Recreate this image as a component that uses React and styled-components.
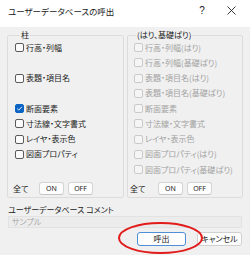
import React from "react";
import styled, { createGlobalStyle } from "styled-components";

const Global = createGlobalStyle`
  html, body { margin: 0; padding: 0; background: #f0f0f0; }
  body { font-family: "Noto Sans CJK JP", "Noto Sans", sans-serif; font-feature-settings: "palt"; }
`;

const Win = styled.div`
  position: relative;
  width: 250px;
  height: 255px;
  background: #f0f0f0;
  overflow: hidden;
  font-size: 8px;
  color: #1a1a1a;
`;

const TitleBar = styled.div`
  height: 27px;
  background: #ffffff;
  display: flex;
  align-items: center;
  padding-left: 8px;
  box-sizing: border-box;
`;

const Title = styled.div`
  flex: 1;
  font-size: 8.5px;
  line-height: 12px;
  margin-top: -6px;
`;

const TitleBtn = styled.div`
  width: ${(p) => p.$w}px;
  display: flex;
  justify-content: center;
  align-items: center;
  font-family: "Liberation Sans", sans-serif;
  font-size: 10px;
  margin-top: -6px;
`;

const Body = styled.div`
  padding: 3px 8px 0 7px;
`;

const Groups = styled.div`
  display: grid;
  grid-template-columns: 117px 116px;
  gap: 3px;
`;

const Group = styled.fieldset`
  margin: 0;
  border: 1px solid #dcdcdc;
  border-radius: 2px;
  padding: 0 0 2px ${(p) => p.$pad}px;
  min-width: 0;
`;

const Legend = styled.legend`
  font-size: 8px;
  line-height: 10px;
  padding: 0 1px;
  margin-left: ${(p) => p.$ml}px;
`;

const List = styled.div`
  display: grid;
  grid-template-rows: repeat(9, 15.25px);
`;

const Item = styled.div`
  display: flex;
  align-items: center;
  gap: 2px;
  white-space: nowrap;
  color: ${(p) => (p.$disabled ? "#a2a2a2" : "#1a1a1a")};
  line-height: 10px;
`;

const Box = styled.span`
  width: 9px;
  height: 9px;
  box-sizing: border-box;
  border-radius: 2px;
  border: 1px solid ${(p) => (p.$checked ? "#0a64c4" : p.$disabled ? "#cacaca" : "#5a5a5a")};
  background: ${(p) => (p.$checked ? "#0a64c4" : p.$disabled ? "#f5f5f5" : "#fcfcfc")};
  display: flex;
  align-items: center;
  justify-content: center;
  flex: none;
`;

const AllRow = styled.div`
  display: flex;
  align-items: center;
  margin-top: 4.75px;
  height: 13px;
`;

const AllLabel = styled.span`
  width: ${(p) => p.$w}px;
  line-height: 10px;
  margin-left: ${(p) => p.$ml}px;
`;

const SmallBtn = styled.button`
  width: 25px;
  height: 13px;
  margin-right: 4px;
  padding: 0;
  border: 1px solid #d4d4d4;
  border-bottom-color: #c4c4c4;
  border-radius: 3px;
  background: #fdfdfd;
  font-family: "Noto Sans", sans-serif;
  font-size: 7px;
  line-height: 11px;
  color: #1a1a1a;
`;

const CommentLabel = styled.div`
  margin-top: 6px;
  line-height: 11px;
  padding-left: 1px;
`;

const CommentBox = styled.div`
  margin-top: 1px;
  height: 12px;
  box-sizing: border-box;
  border: 1px solid #e2e2e2;
  background: #ececec;
  color: #a8a8a8;
  line-height: 10px;
  padding-left: 3px;
  width: 234px;
  margin-left: 1px;
`;

const Buttons = styled.div`
  display: flex;
  justify-content: flex-end;
  gap: 11px;
  margin-top: 4px;
  padding-right: 0;
`;

const DlgBtn = styled.button`
  width: ${(p) => p.$w}px;
  height: 14px;
  padding: 0;
  border-radius: 3px;
  border: 1px solid ${(p) => (p.$primary ? "#4f8fd6" : "#d0d0d0")};
  background: #fdfdfd;
  font-family: "Noto Sans CJK JP", sans-serif;
  font-feature-settings: "palt";
  font-size: 8px;
  line-height: 12px;
  color: #1a1a1a;
`;

const Ring = styled.svg`
  position: absolute;
  left: 117px;
  top: 221px;
  pointer-events: none;
`;

const Check = () => (
  <svg width="7" height="7" viewBox="0 0 7 7">
    <path d="M1.2 3.6 L2.8 5.1 L5.9 1.8" fill="none" stroke="#fff" strokeWidth="0.9" />
  </svg>
);

const leftItems = [
  "行高・列幅",
  null,
  "表題・項目名",
  null,
  "断面要素",
  "寸法線・文字書式",
  "レイヤ・表示色",
  "図面プロパティ",
  null,
];

const rightItems = [
  "行高・列幅(はり)",
  "行高・列幅(基礎ばり)",
  "表題・項目名(はり)",
  "表題・項目名(基礎ばり)",
  "断面要素",
  "寸法線・文字書式",
  "レイヤ・表示色",
  "図面プロパティ(はり)",
  "図面プロパティ(基礎ばり)",
];

function CheckList({ items, disabled, checkedIndex }) {
  return (
    <List>
      {items.map((t, i) =>
        t ? (
          <Item key={i} $disabled={disabled}>
            <Box $disabled={disabled} $checked={i === checkedIndex}>
              {i === checkedIndex && <Check />}
            </Box>
            {t}
          </Item>
        ) : (
          <div key={i} />
        )
      )}
    </List>
  );
}

export default function App() {
  return (
    <Win>
      <Global />
      <TitleBar>
        <Title>ユーザーデータベースの呼出</Title>
        <TitleBtn $w={20}>?</TitleBtn>
        <TitleBtn $w={38}>
          <svg width="9" height="9" viewBox="0 0 9 9">
            <path d="M0.5 0.5 L8.5 8.5 M8.5 0.5 L0.5 8.5" stroke="#222" strokeWidth="0.9" />
          </svg>
        </TitleBtn>
      </TitleBar>
      <Body>
        <Groups>
          <Group $pad={7}>
            <Legend $ml={5}>柱</Legend>
            <CheckList items={leftItems} checkedIndex={4} />
            <AllRow>
              <AllLabel $w={26} $ml={-2}>全て</AllLabel>
              <SmallBtn>ON</SmallBtn>
              <SmallBtn>OFF</SmallBtn>
            </AllRow>
          </Group>
          <Group $pad={6}>
            <Legend $ml={2}>(はり、基礎ばり)</Legend>
            <CheckList items={rightItems} disabled />
            <AllRow>
              <AllLabel $w={28} $ml={-4}>全て</AllLabel>
              <SmallBtn>ON</SmallBtn>
              <SmallBtn>OFF</SmallBtn>
            </AllRow>
          </Group>
        </Groups>
        <CommentLabel>ユーザーデータベース コメント</CommentLabel>
        <CommentBox>サンプル</CommentBox>
        <Buttons>
          <DlgBtn $primary $w={49}>呼出</DlgBtn>
          <DlgBtn $w={45}>キャンセル</DlgBtn>
        </Buttons>
      </Body>
      <Ring width="88" height="34" viewBox="0 0 88 34">
        <ellipse cx="43.5" cy="17" rx="41.5" ry="15" fill="none" stroke="#e21b1b" strokeWidth="2" />
      </Ring>
    </Win>
  );
}
